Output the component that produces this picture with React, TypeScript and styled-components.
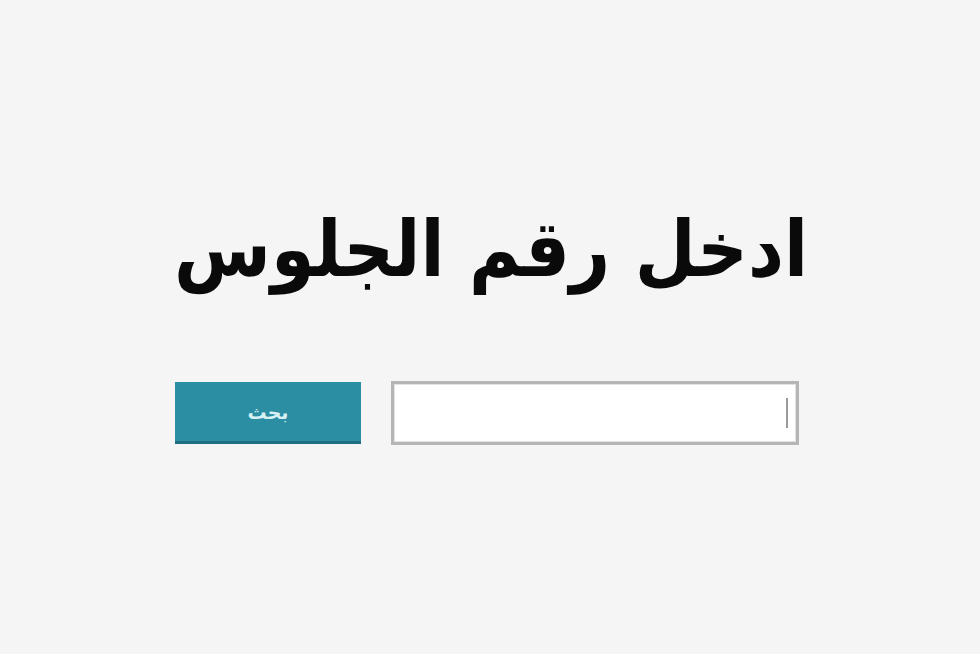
import React from "react";
import styled, { createGlobalStyle } from "styled-components";

const GlobalStyle = createGlobalStyle`
  html, body {
    margin: 0;
    padding: 0;
    background: #f5f5f5;
  }
  body {
    font-family: "DejaVu Sans", "Noto Sans", sans-serif;
  }
`;

const Page = styled.div`
  width: 980px;
  height: 654px;
  box-sizing: border-box;
  display: flex;
  flex-direction: column;
  align-items: center;
  padding-top: 190px;
  background: #f5f5f5;
  direction: rtl;
`;

const Title = styled.h1`
  margin: 0 0 0 2px;
  font-family: "DejaVu Sans Condensed", "DejaVu Sans", sans-serif;
  font-weight: 700;
  font-size: 78px;
  line-height: 118px;
  color: #0a0a0a;
`;

const SearchRow = styled.form`
  display: flex;
  align-items: center;
  gap: 30px;
  margin-top: 73px;
  margin-right: 6px;
`;

const Field = styled.div`
  position: relative;
  width: 408px;
  height: 64px;
  box-sizing: border-box;
  background: #fff;
  border: 3px solid #b5b5b5;
  box-shadow: inset 0 0 0 1px #e2e2e2;
`;

const Caret = styled.span`
  position: absolute;
  right: 8px;
  top: 14px;
  width: 2px;
  height: 30px;
  background: #9a9a9a;
`;

const Button = styled.button`
  width: 186px;
  height: 62px;
  border: none;
  background: #2b8ea3;
  border-bottom: 3px solid #1f6f82;
  color: #d8f1f5;
  font-family: "DejaVu Sans", sans-serif;
  font-weight: 700;
  font-size: 19px;
  padding: 0;
`;

export default function App() {
  return (
    <>
      <GlobalStyle />
      <Page>
        <Title>ادخل رقم الجلوس</Title>
        <SearchRow onSubmit={(e) => e.preventDefault()}>
          <Field>
            <Caret />
          </Field>
          <Button type="submit">بحث</Button>
        </SearchRow>
      </Page>
    </>
  );
}
